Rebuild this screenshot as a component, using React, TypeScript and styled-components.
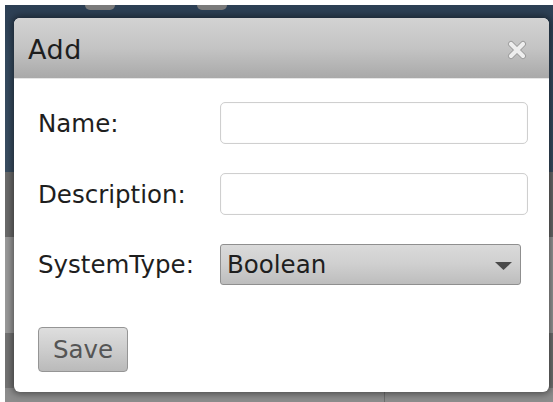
import styled, { createGlobalStyle } from "styled-components";

const GlobalStyle = createGlobalStyle`
  html, body {
    margin: 0;
    padding: 0;
    background: #ffffff;
  }
  body {
    font-family: "DejaVu Sans", Verdana, sans-serif;
  }
`;

const Page = styled.div`
  position: relative;
  width: 548px;
  height: 397px;
  margin: 5px 0 0 5px;
  display: flex;
  flex-direction: column;
  overflow: hidden;
`;

const TopBand = styled.div`
  height: 167px;
  background: linear-gradient(#2c3f54, #34495e 30%, #3a4e62);
  display: flex;
  gap: 82px;
  padding-left: 80px;
`;

const Tab = styled.div`
  width: 30px;
  height: 5px;
  background: #7a7a7a;
  border-radius: 0 0 8px 8px;
`;

const Band = styled.div<{ $h: number; $bg: string }>`
  height: ${(p) => p.$h}px;
  background: ${(p) => p.$bg};
  flex-shrink: 0;
  display: flex;
`;

const Cell = styled.div<{ $w: number }>`
  width: ${(p) => p.$w}px;
  border-right: 1px solid #6e6e6e;
`;

const Dialog = styled.div`
  position: absolute;
  left: 9px;
  top: 13px;
  width: 535px;
  background: #ffffff;
  border-radius: 6px;
  box-shadow: 0 0 7px 2px rgba(0, 0, 0, 0.45);
  overflow: hidden;
`;

const Header = styled.div`
  height: 61px;
  box-sizing: border-box;
  display: flex;
  align-items: center;
  justify-content: space-between;
  padding: 2px 22px 0 14px;
  background: linear-gradient(#d3d3d3, #c4c4c4 50%, #a9a9a9);
  border-bottom: 1px solid #e6e6e6;
`;

const Title = styled.div`
  font-size: 27px;
  color: #1e1e1e;
  letter-spacing: 0.6px;
`;

const Close = styled.button`
  width: 20px;
  height: 20px;
  padding: 0;
  border: none;
  background: none;
  display: flex;
  margin-top: 2px;
`;

const Body = styled.div`
  padding: 23px 21px 20px 24px;
`;

const Form = styled.div`
  display: grid;
  grid-template-columns: 182px 1fr;
  row-gap: 29px;
  align-items: center;
`;

const Label = styled.label`
  font-size: 24.5px;
  color: #1e1e1e;
  white-space: nowrap;
`;

const TextInput = styled.input`
  height: 42px;
  box-sizing: border-box;
  width: 100%;
  border: 1px solid #cfcfcf;
  border-radius: 5px;
  box-shadow: inset 0 0 1px #e0e0e0;
  outline: none;
  font-family: inherit;
  font-size: 20px;
`;

const SelectWrap = styled.div`
  position: relative;
  width: 301px;
`;

const Select = styled.select`
  appearance: none;
  width: 100%;
  height: 41px;
  box-sizing: border-box;
  border: 1px solid #8f8f8f;
  border-radius: 3px;
  background: linear-gradient(#dadada, #cfcfcf 50%, #bdbdbd);
  font-family: inherit;
  font-size: 24.5px;
  color: #1e1e1e;
  padding: 0 30px 0 6px;
  outline: none;
`;

const Arrow = styled.svg`
  position: absolute;
  right: 9px;
  top: 18px;
  pointer-events: none;
`;

const SaveButton = styled.button`
  margin-top: 42px;
  width: 90px;
  height: 45px;
  border: 1px solid #959595;
  border-radius: 4px;
  background: linear-gradient(#dedede, #cdcdcd 50%, #bababa);
  font-family: inherit;
  font-size: 24.5px;
  color: #555;
  padding: 0;
`;

const App = (): JSX.Element => {
  return (
    <>
      <GlobalStyle />
      <Page>
        <TopBand>
          <Tab />
          <Tab />
        </TopBand>
        <Band $h={65} $bg="#6b6b6b" />
        <Band $h={96} $bg="#9a9a9a" />
        <Band $h={55} $bg="#737373" />
        <Band $h={14} $bg="#8c8c8c">
          <Cell $w={379} />
        </Band>

        <Dialog>
          <Header>
            <Title>Add</Title>
            <Close aria-label="close">
              <svg width="20" height="20" viewBox="0 0 20 20">
                <g strokeLinecap="round">
                  <path d="M4 4 L16 16 M16 4 L4 16" stroke="#9a9a9a" strokeWidth="6" />
                  <path d="M4 4 L16 16 M16 4 L4 16" stroke="#eeeeee" strokeWidth="4.2" />
                </g>
              </svg>
            </Close>
          </Header>
          <Body>
            <Form>
              <Label>Name:</Label>
              <TextInput />
              <Label>Description:</Label>
              <TextInput />
              <Label>SystemType:</Label>
              <SelectWrap>
                <Select defaultValue="Boolean">
                  <option>Boolean</option>
                  <option>Integer</option>
                  <option>String</option>
                </Select>
                <Arrow width="17" height="8" viewBox="0 0 17 8">
                  <path d="M0 0 H17 L8.5 8 Z" fill="#4a4a4a" />
                </Arrow>
              </SelectWrap>
            </Form>
            <SaveButton>Save</SaveButton>
          </Body>
        </Dialog>
      </Page>
    </>
  );
};

export default App;
